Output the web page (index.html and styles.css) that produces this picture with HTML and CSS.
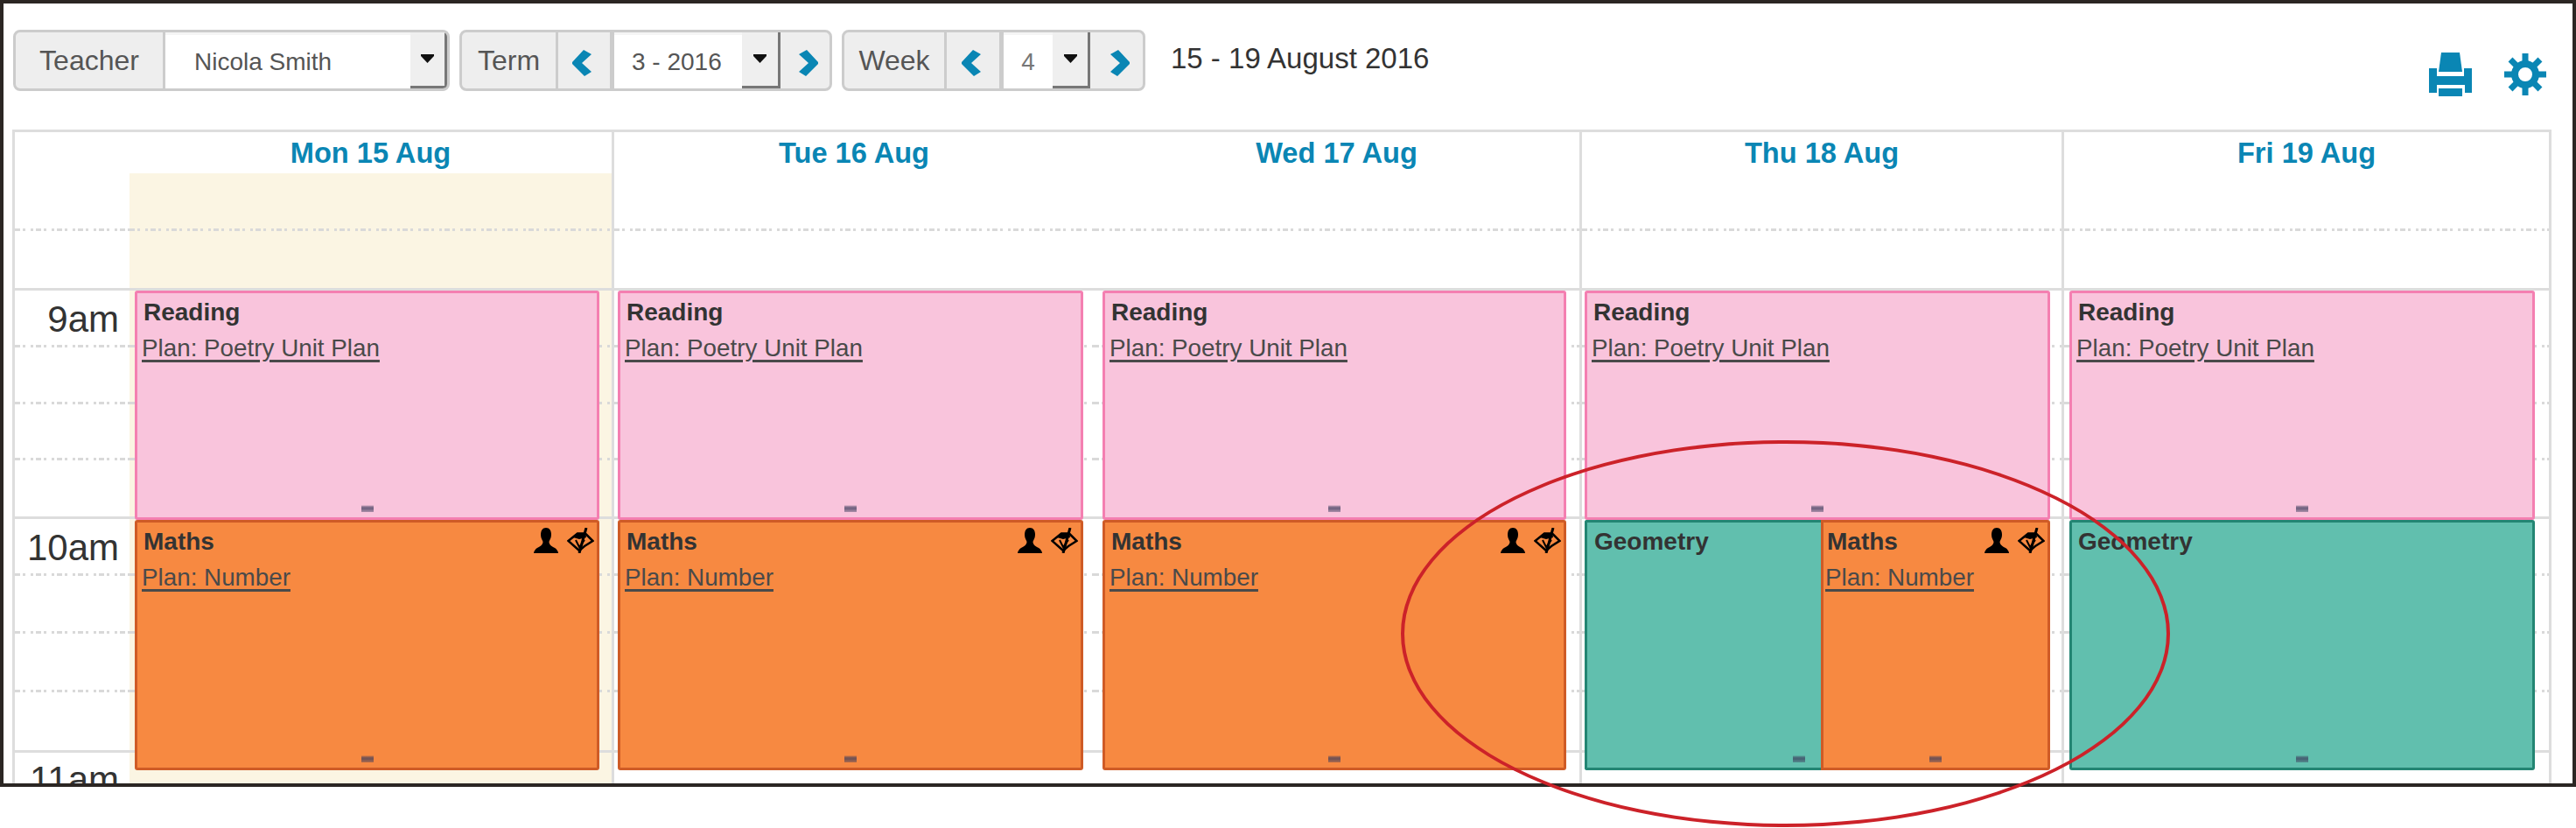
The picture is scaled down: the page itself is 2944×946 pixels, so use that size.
FILE: index.html
```html
<!DOCTYPE html>
<html lang="en">
<head>
<meta charset="utf-8">
<title>Timetable</title>
<link rel="stylesheet" href="styles.css">
</head>
<body>
<svg class="sprite" aria-hidden="true">
  <symbol id="i-left" viewBox="0 0 22 30"><path d="M13 0 22 5 11 15 22 25 14 30 0 16V14Z"/></symbol>
  <symbol id="i-right" viewBox="0 0 22 30"><path d="M9 0 0 5 11 15 0 25 8 30 22 16V14Z"/></symbol>
  <symbol id="i-caret" viewBox="0 0 15 10"><path d="M0 0H15V2L7.500 10 0 2Z"/></symbol>
  <symbol id="i-user" viewBox="0 0 28 29"><path d="M14 0C10 0 8 3 8 8 8 12 10 14 10.500 16 10.500 19 8 21 4 23 2 24 0 27 0 29H28C28 27 26 24 24 23 20 21 17.500 19 17.500 16 18 14 20 12 20 8 20 3 18 0 14 0Z"/></symbol>
  <symbol id="i-eye" viewBox="0 0 31 29">
    <path d="M1.500 15 12 6.500H21L29.500 15 20 21 14 26Z" fill="none" stroke="#000" stroke-width="2.500"/>
    <path d="M7 11 12 6H21L22 11 14 13Z"/>
    <path d="M10 14 14 22 20 14" fill="none" stroke="#000" stroke-width="2"/>
    <path d="M22 0 14 29" fill="none" stroke="#000" stroke-width="3"/>
  </symbol>
</svg>

<div class="frame">
  <header class="toolbar">
    <div class="group">
      <div class="label w-teacher">Teacher</div>
      <div class="val val-teacher">Nicola Smith</div>
      <div class="drop drop-teacher"><svg class="caret"><use href="#i-caret"/></svg></div>
    </div>
    <div class="group">
      <div class="label w-term">Term</div>
      <div class="nav nav-prev prev-term"><svg class="chev"><use href="#i-left"/></svg></div>
      <div class="val val-term">3 - 2016</div>
      <div class="drop drop-term"><svg class="caret"><use href="#i-caret"/></svg></div>
      <div class="nav nav-next next-term"><svg class="chev"><use href="#i-right"/></svg></div>
    </div>
    <div class="group">
      <div class="label w-week">Week</div>
      <div class="nav nav-prev prev-week"><svg class="chev"><use href="#i-left"/></svg></div>
      <div class="val val-week">4</div>
      <div class="drop drop-week"><svg class="caret"><use href="#i-caret"/></svg></div>
      <div class="nav nav-next next-week"><svg class="chev"><use href="#i-right"/></svg></div>
    </div>
    <div class="range">15 - 19 August 2016</div>
    <div class="tools">
      <svg class="print" viewBox="0 0 49 50"><path d="M14 0H35L38 22H11Z"/><path d="M0 18H9V27H40V18H49V46H41V37H9V46H0Z"/><path d="M11 41H38V50H11Z"/></svg>
      <svg class="gear" viewBox="0 0 48 50">
        <circle class="gear-ring" cx="24" cy="25" r="12"/>
        <rect x="20.500" y="1" width="7" height="10"/>
        <rect x="20.500" y="1" width="7" height="10" transform="rotate(45 24 25)"/>
        <rect x="20.500" y="1" width="7" height="10" transform="rotate(90 24 25)"/>
        <rect x="20.500" y="1" width="7" height="10" transform="rotate(135 24 25)"/>
        <rect x="20.500" y="1" width="7" height="10" transform="rotate(180 24 25)"/>
        <rect x="20.500" y="1" width="7" height="10" transform="rotate(225 24 25)"/>
        <rect x="20.500" y="1" width="7" height="10" transform="rotate(270 24 25)"/>
        <rect x="20.500" y="1" width="7" height="10" transform="rotate(315 24 25)"/>
      </svg>
    </div>
  </header>

  <section class="cal">
    <div class="head head-time"></div>
    <div class="head divided">Mon 15 Aug</div>
    <div class="head">Tue 16 Aug</div>
    <div class="head divided">Wed 17 Aug</div>
    <div class="head divided">Thu 18 Aug</div>
    <div class="head">Fri 19 Aug</div>

    <div class="day">
      <div class="slots"><i></i><i></i><i></i><i></i><i></i><i></i><i></i><i></i><i></i><i></i></div>
      <div class="events">
        <div class="time t-9">9am</div>
        <div class="time t-10">10am</div>
        <div class="time t-11">11am</div>
      </div>
    </div>

    <div class="day divided day-mon">
      <div class="slots"><i></i><i></i><i></i><i></i><i></i><i></i><i></i><i></i><i></i><i></i></div>
      <div class="events">
        <div class="ev ev-pink"><div class="ev-top"><b>Reading</b></div><a class="plan">Plan: Poetry Unit Plan</a><span class="grip"></span></div>
        <div class="ev ev-orange"><div class="ev-top"><b>Maths</b><span class="ev-icons"><svg class="ic-user"><use href="#i-user"/></svg><svg class="ic-eye"><use href="#i-eye"/></svg></span></div><a class="plan">Plan: Number</a><span class="grip"></span></div>
      </div>
    </div>

    <div class="day day-tue">
      <div class="slots"><i></i><i></i><i></i><i></i><i></i><i></i><i></i><i></i><i></i><i></i></div>
      <div class="events">
        <div class="ev ev-pink"><div class="ev-top"><b>Reading</b></div><a class="plan">Plan: Poetry Unit Plan</a><span class="grip"></span></div>
        <div class="ev ev-orange"><div class="ev-top"><b>Maths</b><span class="ev-icons"><svg class="ic-user"><use href="#i-user"/></svg><svg class="ic-eye"><use href="#i-eye"/></svg></span></div><a class="plan">Plan: Number</a><span class="grip"></span></div>
      </div>
    </div>

    <div class="day divided day-wed">
      <div class="slots"><i></i><i></i><i></i><i></i><i></i><i></i><i></i><i></i><i></i><i></i></div>
      <div class="events">
        <div class="ev ev-pink"><div class="ev-top"><b>Reading</b></div><a class="plan">Plan: Poetry Unit Plan</a><span class="grip"></span></div>
        <div class="ev ev-orange"><div class="ev-top"><b>Maths</b><span class="ev-icons"><svg class="ic-user"><use href="#i-user"/></svg><svg class="ic-eye"><use href="#i-eye"/></svg></span></div><a class="plan">Plan: Number</a><span class="grip"></span></div>
      </div>
    </div>

    <div class="day divided day-thu">
      <div class="slots"><i></i><i></i><i></i><i></i><i></i><i></i><i></i><i></i><i></i><i></i></div>
      <div class="events">
        <div class="ev ev-pink"><div class="ev-top"><b>Reading</b></div><a class="plan">Plan: Poetry Unit Plan</a><span class="grip"></span></div>
        <div class="ev-pair">
          <div class="ev ev-teal ev-left"><div class="ev-top"><b>Geometry</b></div><span class="grip grip-side"></span></div>
          <div class="ev ev-orange ev-right"><div class="ev-top"><b>Maths</b><span class="ev-icons"><svg class="ic-user"><use href="#i-user"/></svg><svg class="ic-eye"><use href="#i-eye"/></svg></span></div><a class="plan">Plan: Number</a><span class="grip"></span></div>
        </div>
      </div>
    </div>

    <div class="day day-fri">
      <div class="slots"><i></i><i></i><i></i><i></i><i></i><i></i><i></i><i></i><i></i><i></i></div>
      <div class="events">
        <div class="ev ev-pink"><div class="ev-top"><b>Reading</b></div><a class="plan">Plan: Poetry Unit Plan</a><span class="grip"></span></div>
        <div class="ev ev-teal"><div class="ev-top"><b>Geometry</b></div><span class="grip"></span></div>
      </div>
    </div>
  </section>
</div>

<div class="annotation"></div>
</body>
</html>
```

FILE: styles.css
```css
* { box-sizing: border-box; }

html, body {
  margin: 0;
  height: 946px;
  overflow: hidden;
  background: #fff;
}

body {
  position: relative;
  font-family: "Liberation Sans", Arial, sans-serif;
  color: #333;
}

.sprite { display: none; }

.frame {
  width: 2944px;
  height: 899px;
  border: 4px solid #2b2623;
  padding: 30px 24px 0 10px;
  overflow: hidden;
  background: #fff;
}

/* toolbar */
.toolbar {
  display: flex;
  align-items: flex-start;
  padding-left: 1px;
  height: 70px;
}

.group {
  display: flex;
  height: 70px;
  margin-right: 11px;
  border: 3px solid #ccc;
  border-radius: 8px;
  overflow: hidden;
  background: #eee;
  flex: none;
}

.label {
  display: flex;
  align-items: center;
  justify-content: center;
  border-right: 3px solid #ccc;
  font-size: 32px;
  color: #555;
}
.w-teacher { width: 171px; }
.w-term { width: 110px; }
.w-week { width: 117px; }

.val {
  display: flex;
  align-items: center;
  border-top: 3px solid #f5f5f5;
  background: #fff;
  font-size: 28px;
  color: #555;
}
.val-teacher { width: 280px; padding-left: 33px; }
.val-term { width: 146px; padding-left: 20px; }
.val-week { width: 56px; justify-content: center; color: #777; }

.drop {
  display: flex;
  justify-content: center;
  padding-top: 25px;
  background: #efefef;
  border-right: 3px solid #777;
  border-bottom: 3px solid #777;
}
.drop-teacher { width: 42px; }
.drop-term { width: 44px; }
.drop-week { width: 43px; }

.caret { width: 15px; height: 10px; fill: #111; }

.nav {
  display: flex;
  justify-content: center;
  padding-top: 20px;
}
.nav-prev { border-right: 5px solid #ccc; padding-right: 5px; }
.nav-next { padding-left: 7px; }
.prev-term { width: 64px; }
.next-term { width: 56px; }
.prev-week { width: 65px; }
.next-week { width: 60px; }

.chev { width: 22px; height: 30px; fill: #0a86b4; }

.range {
  margin: 15px 0 0 18px;
  font-size: 33px;
  line-height: 36px;
  color: #333;
}

.tools {
  display: flex;
  gap: 37px;
  margin: 26px 6px 0 auto;
  fill: #0a86b4;
}
.print { width: 49px; height: 50px; }
.gear { width: 48px; height: 50px; }
.gear-ring { fill: none; stroke: #0a86b4; stroke-width: 8; }

/* calendar */
.cal {
  --rows: 66px 68px 65px 65px 64px 67px 65px 66px 67px 69px 40px;
  display: grid;
  grid-template-columns: 131px 554px 548px 558px 551px 554px;
  grid-template-rows: 47px 702px;
  margin-top: 44px;
  border: 3px solid #ddd;
  border-bottom: 0;
  height: 752px;
}

.head {
  font-size: 32.6px;
  font-weight: bold;
  line-height: 47px;
  text-align: center;
  color: #0a86b4;
}

.divided { border-right: 3px solid #ddd; }

.day {
  display: grid;
  --ml: 0px;
  --mr: 0px;
}
.day > * { grid-area: 1 / 1; }

.day-mon { background: #fbf5e3; --ml: 6px; --mr: 14px; }
.day-tue { --ml: 4px; --mr: 12px; }
.day-wed { --ml: 10px; --mr: 15px; }
.day-thu { --ml: 3px; --mr: 13px; }
.day-fri { --ml: 6px; --mr: 16px; }

.slots, .events {
  display: grid;
  grid-template-rows: var(--rows);
  grid-template-columns: 100%;
}

.slots i {
  display: block;
  background-image: repeating-linear-gradient(90deg,
    #d9d9d9 0 6px, #0000 6px 9px,
    #d9d9d9 9px 12px, #0000 12px 18px,
    #d9d9d9 18px 21px, #0000 21px 24px);
  background-size: 100% 3px;
  background-position: 0 100%;
  background-repeat: no-repeat;
}
.slots i:nth-child(2),
.slots i:nth-child(6),
.slots i:nth-child(10) { background-image: linear-gradient(#ddd, #ddd); }

/* time labels */
.time {
  font-size: 42px;
  line-height: 48px;
  margin-top: 9px;
  padding-right: 12px;
  text-align: right;
  color: #333;
}
.t-9 { grid-row: 3; }
.t-10 { grid-row: 7; }
.t-11 { grid-row: 11; margin-top: 7px; }

/* events */
.ev {
  position: relative;
  margin: 0 var(--mr) 0 var(--ml);
  padding: 6px 3px 0 7px;
  border: 3px solid;
  border-radius: 3px;
  font-size: 28px;
  line-height: 32px;
}
.events > .ev-pink { grid-row: 3 / span 4; margin-bottom: -1px; }
.events > .ev-orange,
.events > .ev-teal,
.ev-pair { grid-row: 7 / span 5; margin-top: 1px; margin-bottom: 20px; }

.ev-pink { background: #f9c4dc; border-color: #f47fb1; }
.ev-orange { background: #f78941; border-color: #cf5b26; }
.ev-teal { background: #61bfae; border-color: #238573; }

.ev-pair {
  display: flex;
  margin-left: var(--ml);
  margin-right: var(--mr);
}
.ev-pair .ev { margin: 0; }
.ev-left { flex: none; width: 270px; border-right: 0; border-radius: 3px 0 0 3px; padding-left: 8px; }
.ev-right { flex: 1; padding-left: 4px; border-radius: 0 3px 3px 0; }

.ev-top {
  display: flex;
  align-items: flex-start;
  height: 32px;
}
.ev-top b { color: #333; }

.ev-icons {
  display: flex;
  gap: 10px;
  margin-left: auto;
}
.ic-user { width: 28px; height: 29px; fill: #000; }
.ic-eye { width: 31px; height: 29px; fill: #000; }

.plan {
  display: block;
  width: max-content;
  margin: 9px 0 0 -2px;
  color: #4a4a4a;
  font-size: 27.8px;
  text-decoration: underline;
  text-decoration-thickness: 3px;
  text-underline-offset: 4px;
}

.grip {
  position: absolute;
  bottom: 6px;
  left: 50%;
  width: 14px;
  height: 8px;
  margin-left: -7px;
  background: linear-gradient(#0000 0, #3c3c5c99 25%, #3c3c5cbb 50%, #3c3c5c66 100%);
}
.grip-side { left: auto; right: 18px; margin-left: 0; }

/* hand-drawn annotation over the screenshot */
.annotation {
  position: absolute;
  left: 1601px;
  top: 503px;
  width: 879px;
  height: 442px;
  border: 4.5px solid #cc2229;
  border-radius: 50%;
}
```
